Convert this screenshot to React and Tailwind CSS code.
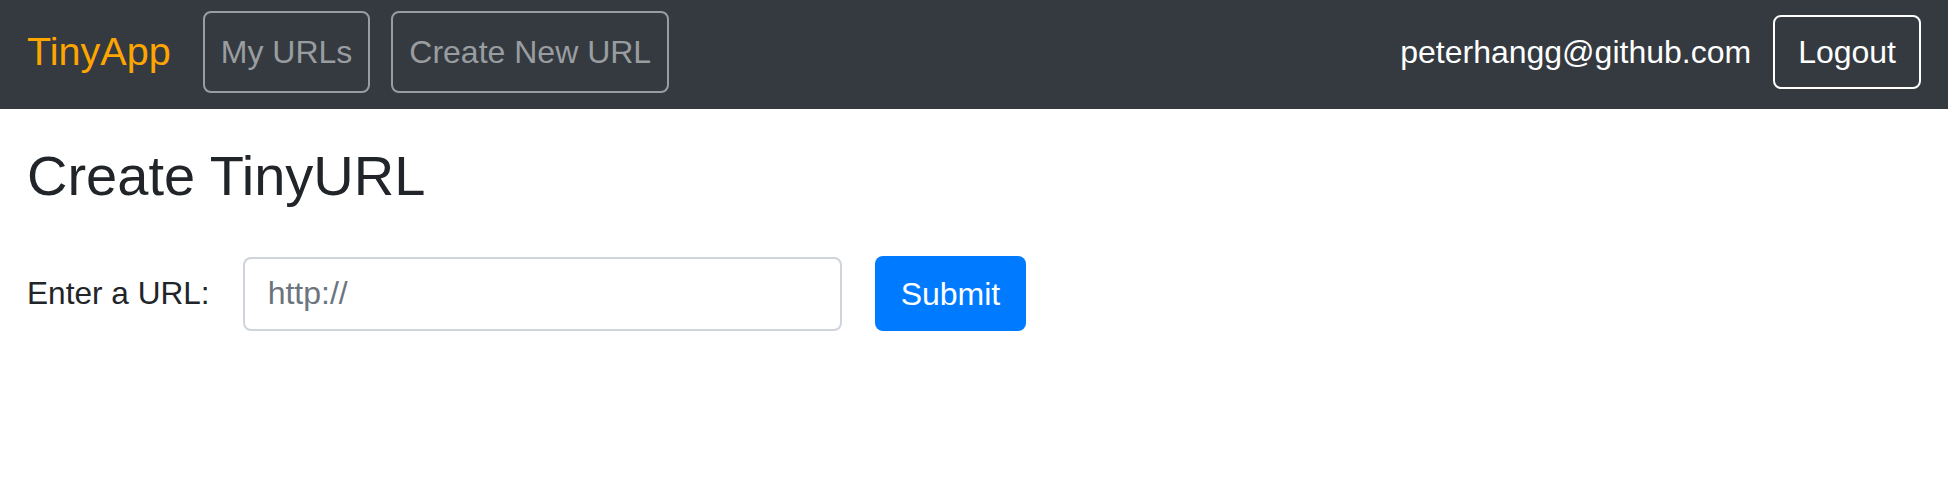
const NavButton = ({ children }) => (
  <a
    href="#"
    className="flex items-center h-[82px] px-[16px] border-2 border-[#9a9da0] rounded-[8px] text-[#9a9da0] text-[32px] leading-[1.5]"
  >
    {children}
  </a>
);

const App = () => {
  return (
    <div className="min-h-[480px] bg-white font-['Liberation_Sans',Arial,sans-serif]">
      {/* Navbar */}
      <nav className="flex items-center justify-between h-[109px] pb-[5px] px-[27px] bg-[#343a40]">
        <div className="flex items-center">
          <a href="#" className="mr-[32px] text-[39.6px] leading-[1.5] text-[#ffa500]">
            TinyApp
          </a>
          <div className="flex items-center gap-[21px]">
            <NavButton>My URLs</NavButton>
            <NavButton>Create New URL</NavButton>
          </div>
        </div>

        <div className="flex items-center gap-[22px]">
          <span className="text-[32px] leading-[1.5] text-white">
            peterhangg@github.com
          </span>
          <button className="flex items-center h-[74px] px-[23px] border-2 border-white rounded-[8px] text-[32px] leading-[1.5] text-white">
            Logout
          </button>
        </div>
      </nav>

      {/* Content */}
      <main className="px-[27px]">
        <h1 className="mt-[33px] text-[56px] leading-[1.2] text-[#212529]">
          Create TinyURL
        </h1>

        <form className="flex items-center mt-[47px]" onSubmit={(e) => e.preventDefault()}>
          <label className="text-[31.6px] leading-[1.5] text-[#212529]">
            Enter a URL:
          </label>
          <input
            type="text"
            placeholder="http://"
            className="ml-[33px] w-[599px] h-[74px] px-[23px] border-2 border-[#ced4da] rounded-[8px] text-[32px] text-[#495057] placeholder:text-[#6c757d] outline-none"
          />
          <button
            type="submit"
            className="ml-[33px] h-[75px] px-[26px] rounded-[8px] bg-[#007bff] text-[32px] leading-[1.5] text-white"
          >
            Submit
          </button>
        </form>
      </main>
    </div>
  );
};

export default App;
